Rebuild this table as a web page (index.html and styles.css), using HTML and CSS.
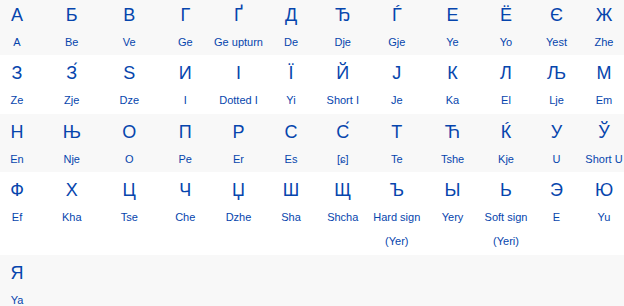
FILE: index.html
```html
<!DOCTYPE html>
<html lang="en">
<head>
<meta charset="utf-8">
<title>Cyrillic alphabet</title>
<link rel="stylesheet" href="styles.css">
</head>
<body>
<table class="alphabet">
<colgroup>
<col class="c1"><col class="c2"><col class="c3"><col class="c4"><col class="c5"><col class="c6">
<col class="c7"><col class="c8"><col class="c9"><col class="c10"><col class="c11"><col class="c12">
</colgroup>
<tbody>
<tr class="row alt">
<td><div class="letter">А</div><div class="name">A</div></td>
<td><div class="letter">Б</div><div class="name">Be</div></td>
<td><div class="letter">В</div><div class="name">Ve</div></td>
<td><div class="letter">Г</div><div class="name">Ge</div></td>
<td><div class="letter">Ґ</div><div class="name">Ge upturn</div></td>
<td><div class="letter">Д</div><div class="name">De</div></td>
<td><div class="letter">Ђ</div><div class="name">Dje</div></td>
<td><div class="letter">Ѓ</div><div class="name">Gje</div></td>
<td><div class="letter">Е</div><div class="name">Ye</div></td>
<td><div class="letter">Ё</div><div class="name">Yo</div></td>
<td><div class="letter">Є</div><div class="name">Yest</div></td>
<td><div class="letter">Ж</div><div class="name">Zhe</div></td>
</tr>
<tr class="row">
<td><div class="letter">З</div><div class="name">Ze</div></td>
<td><div class="letter">З́</div><div class="name">Zje</div></td>
<td><div class="letter">Ѕ</div><div class="name">Dze</div></td>
<td><div class="letter">И</div><div class="name">I</div></td>
<td><div class="letter">І</div><div class="name">Dotted I</div></td>
<td><div class="letter">Ї</div><div class="name">Yi</div></td>
<td><div class="letter">Й</div><div class="name">Short I</div></td>
<td><div class="letter">Ј</div><div class="name">Je</div></td>
<td><div class="letter">К</div><div class="name">Ka</div></td>
<td><div class="letter">Л</div><div class="name">El</div></td>
<td><div class="letter">Љ</div><div class="name">Lje</div></td>
<td><div class="letter">М</div><div class="name">Em</div></td>
</tr>
<tr class="row alt">
<td><div class="letter">Н</div><div class="name">En</div></td>
<td><div class="letter">Њ</div><div class="name">Nje</div></td>
<td><div class="letter">О</div><div class="name">O</div></td>
<td><div class="letter">П</div><div class="name">Pe</div></td>
<td><div class="letter">Р</div><div class="name">Er</div></td>
<td><div class="letter">С</div><div class="name">Es</div></td>
<td><div class="letter">С́</div><div class="name">[ɕ]</div></td>
<td><div class="letter">Т</div><div class="name">Te</div></td>
<td><div class="letter">Ћ</div><div class="name">Tshe</div></td>
<td><div class="letter">Ќ</div><div class="name">Kje</div></td>
<td><div class="letter">У</div><div class="name">U</div></td>
<td><div class="letter">Ў</div><div class="name">Short U</div></td>
</tr>
<tr class="row">
<td><div class="letter">Ф</div><div class="name">Ef</div></td>
<td><div class="letter">Х</div><div class="name">Kha</div></td>
<td><div class="letter">Ц</div><div class="name">Tse</div></td>
<td><div class="letter">Ч</div><div class="name">Che</div></td>
<td><div class="letter">Џ</div><div class="name">Dzhe</div></td>
<td><div class="letter">Ш</div><div class="name">Sha</div></td>
<td><div class="letter">Щ</div><div class="name">Shcha</div></td>
<td><div class="letter">Ъ</div><div class="name">Hard sign</div><div class="name">(Yer)</div></td>
<td><div class="letter">Ы</div><div class="name">Yery</div></td>
<td><div class="letter">Ь</div><div class="name">Soft sign</div><div class="name">(Yeri)</div></td>
<td><div class="letter">Э</div><div class="name">E</div></td>
<td><div class="letter">Ю</div><div class="name">Yu</div></td>
</tr>
<tr class="row alt">
<td><div class="letter">Я</div><div class="name">Ya</div></td>
<td></td><td></td><td></td><td></td><td></td><td></td><td></td><td></td><td></td><td></td><td></td>
</tr>
</tbody>
</table>
</body>
</html>
```
FILE: styles.css
```css
html, body {
  margin: 0;
  padding: 0;
  background: #ffffff;
  overflow: hidden;
}

body {
  font-family: "Liberation Sans", Arial, sans-serif;
  color: #0645ad;
}

.alphabet {
  width: 636.5px;
  table-layout: fixed;
  border-collapse: collapse;
  margin-top: -3.5px;
  margin-left: -9.5px;
}

.c1 { width: 53px; }
.c2 { width: 56.5px; }
.c3 { width: 58.5px; }
.c4 { width: 53.5px; }
.c5 { width: 53px; }
.c6 { width: 52px; }
.c7 { width: 51.5px; }
.c8 { width: 56.5px; }
.c9 { width: 55px; }
.c10 { width: 52px; }
.c11 { width: 49px; }
.c12 { width: 46px; }

.alphabet td {
  padding: 3px 0 1.5px;
  text-align: center;
  vertical-align: top;
}

.row.alt {
  background: #f8f8f8;
}

.letter {
  font-size: 18px;
  line-height: 30px;
}

.name {
  font-size: 11px;
  line-height: 24px;
  white-space: nowrap;
}
```
